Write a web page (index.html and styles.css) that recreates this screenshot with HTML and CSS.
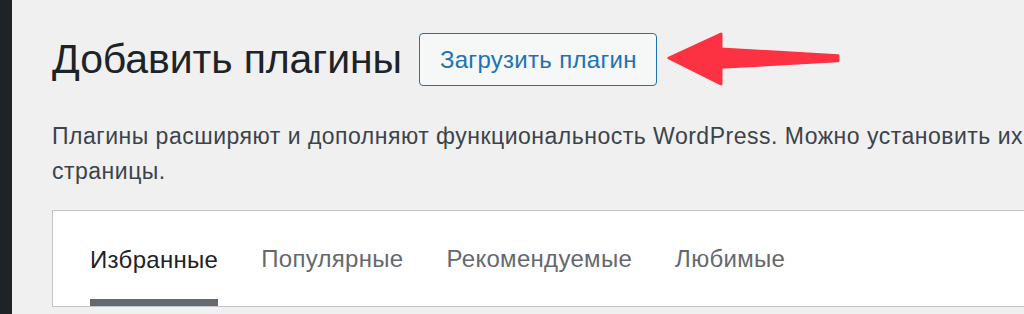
FILE: index.html
```html
<!DOCTYPE html>
<html lang="ru">
<head>
<meta charset="utf-8">
<link rel="stylesheet" href="styles.css">
</head>
<body>
<div class="sidebar"></div>
<div class="main">
  <div class="header">
    <h1 class="title">Добавить плагины</h1>
    <button class="upload-btn">Загрузить плагин</button>
    <svg class="arrow" width="180" height="60" viewBox="0 0 180 60">
      <path d="M4 28 L56 4 L56 19 L173 25.7 L173 30.7 L56 37.3 L56 54 Z" fill="#fc3243" stroke="#fc3243" stroke-width="3" stroke-linejoin="round"/>
    </svg>
  </div>
  <p class="intro">Плагины расширяют и дополняют функциональность WordPress. Можно установить их автоматически из каталога плагинов WordPress или загрузить плагин в формате .zip, нажав на кнопку вверху этой<br>страницы.</p>
  <div class="tabs-box">
    <nav class="tabs">
      <span class="tab active">Избранные</span>
      <span class="tab">Популярные</span>
      <span class="tab">Рекомендуемые</span>
      <span class="tab">Любимые</span>
    </nav>
  </div>
</div>
</body>
</html>
```
FILE: styles.css
```css
html, body {
  margin: 0;
  height: 100%;
  overflow: hidden;
}
body {
  background: #f0f0f1;
  display: flex;
  font-family: "Liberation Sans", Arial, sans-serif;
}
.sidebar {
  width: 12px;
  flex: none;
  background: #1d2327;
  height: 100%;
}
.main {
  flex: none;
  width: 1400px;
  padding-left: 40px;
  padding-top: 33px;
}
.header {
  display: flex;
  align-items: center;
  height: 53px;
}
.title {
  margin: 0;
  font-size: 41px;
  font-weight: 400;
  color: #1d2327;
  letter-spacing: -0.1px;
}
.upload-btn {
  margin-left: 17px;
  height: 53px;
  padding: 0 19px 0 20px;
  border: 1px solid #2271b1;
  border-radius: 4px;
  background: #f6f7f7;
  color: #2271b1;
  font-family: inherit;
  font-size: 24px;
  letter-spacing: 0.3px;
}
.arrow {
  margin-left: 8px;
  margin-top: 1px;
}
.intro {
  margin: 33px 0 0;
  font-size: 23px;
  line-height: 35px;
  letter-spacing: 0.5px;
  color: #3c434a;
  white-space: nowrap;
}
.tabs-box {
  margin-top: 21px;
  background: #fff;
  border: 1px solid #c3c4c7;
  box-sizing: border-box;
  height: 97px;
}
.tabs {
  display: flex;
  gap: 43px;
  padding-left: 37px;
  height: 100%;
}
.tab {
  display: flex;
  align-items: center;
  font-size: 24px;
  letter-spacing: 0.3px;
  color: #646970;
  box-sizing: border-box;
}
.tab.active {
  color: #1d2327;
  border-bottom: 7px solid #646970;
  padding-top: 9px;
}
```
